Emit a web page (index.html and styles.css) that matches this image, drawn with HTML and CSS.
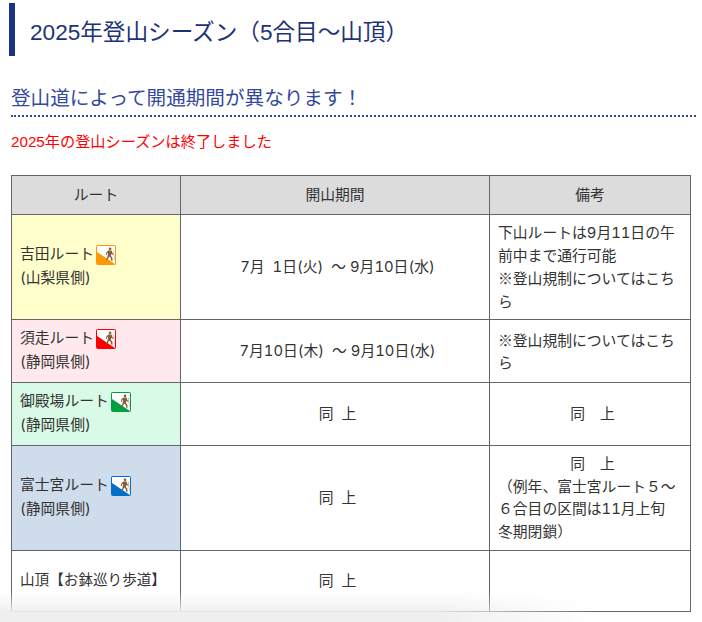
FILE: index.html
```html
<!DOCTYPE html>
<html lang="ja">
<head>
<meta charset="utf-8">
<title>2025年登山シーズン</title>
<link rel="stylesheet" href="styles.css">
</head>
<body>
<svg class="defs" width="0" height="0" aria-hidden="true">
  <symbol id="hiker" viewBox="0 0 20 20">
    <path d="M1 1H19V19L1 7Z" fill="#fff"/>
    <g transform="translate(4 .2) scale(.85)">
      <path d="M11.8 2.6a1.6 1.6 0 1 1 .1 3.2 1.6 1.6 0 0 1-.1-3.2ZM9.8 6.2l3.8.1 1.1 3.2 1.6 1-.6 1.1-2.4-1.2-.5 2.2 1.7 2 .3 3.6h-1.6l-.5-3-1.9-1.8-1.2 2.6-1.6 1.7-1-.9 1.4-2 1-4.2.1-2-1 .9-.3 2-1.2-.3.5-2.8Z" fill="#85603f"/>
      <path d="M15.6 6.5h.7l1 11h-.6Z" fill="#b59a80"/>
    </g>
  </symbol>
</svg>
<main class="page">
  <h1 class="title">2025年登山シーズン（5合目〜山頂）</h1>
  <h2 class="subtitle">登山道によって開通期間が異なります！</h2>
  <p class="notice">2025年の登山シーズンは終了しました</p>
  <table class="season">
    <colgroup><col class="col-route"><col class="col-period"><col class="col-note"></colgroup>
    <thead>
      <tr class="row-head"><th>ルート</th><th>開山期間</th><th>備考</th></tr>
    </thead>
    <tbody>
      <tr class="row-tall">
        <td class="route yoshida">吉田ルート<svg class="icon icon-orange"><use href="#hiker"/></svg><br>(山梨県側)</td>
        <td class="center shifted">7月&nbsp; 1日(火) &nbsp;〜 9月10日(水)</td>
        <td class="note">下山ルートは9月11日の午前中まで通行可能<span class="rule">※登山規制についてはこちら</span></td>
      </tr>
      <tr class="row-mid">
        <td class="route subashiri">須走ルート<svg class="icon icon-red"><use href="#hiker"/></svg><br>(静岡県側)</td>
        <td class="center shifted">7月10日(木) &nbsp;〜 9月10日(水)</td>
        <td class="note"><span class="rule">※登山規制についてはこちら</span></td>
      </tr>
      <tr class="row-mid">
        <td class="route gotemba">御殿場ルート<svg class="icon icon-green"><use href="#hiker"/></svg><br>(静岡県側)</td>
        <td class="center shifted">同&nbsp;&nbsp;上</td>
        <td class="center shifted">同　上</td>
      </tr>
      <tr class="row-tall">
        <td class="route fujinomiya">富士宮ルート<svg class="icon icon-blue"><use href="#hiker"/></svg><br>(静岡県側)</td>
        <td class="center shifted">同&nbsp;&nbsp;上</td>
        <td class="note"><span class="same">同　上</span>（例年、富士宮ルート５～６合目の区間は11月上旬<br>冬期閉鎖）</td>
      </tr>
      <tr class="row-last">
        <td class="route summit">山頂【お鉢巡り歩道】</td>
        <td class="center shifted">同&nbsp;&nbsp;上</td>
        <td class="note"></td>
      </tr>
    </tbody>
  </table>
</main>
<div class="fade"></div>
</body>
</html>
```
FILE: styles.css
```css
html, body {
  margin: 0;
  padding: 0;
  background: #fff;
}
body {
  position: relative;
  width: 702px;
  height: 622px;
  overflow: hidden;
  font-family: "Liberation Sans", "Noto Sans CJK JP", sans-serif;
  color: #333;
}
.defs {
  position: absolute;
}
.page {
  padding: 3px 0 0 9px;
}
.title {
  margin: 0;
  height: 53px;
  line-height: 60px;
  box-sizing: border-box;
  border-left: 6px solid #1c3384;
  padding-left: 15px;
  font-size: 22.6px;
  font-weight: normal;
  color: #1d3278;
}
.subtitle {
  margin: 27px 6px 0 2px;
  padding-bottom: 2px;
  height: 30px;
  line-height: 30px;
  border-bottom: 2px dotted #2c46a0;
  font-size: 19.6px;
  font-weight: normal;
  color: #34499c;
}
.notice {
  margin: 14px 0 0 2px;
  height: 22px;
  line-height: 22px;
  font-size: 15.2px;
  color: #ff0000;
}
.season {
  margin: 22px 0 0 2px;
  width: 679px;
  table-layout: fixed;
  border-collapse: collapse;
  font-family: Inter, "Noto Sans CJK JP", sans-serif;
  font-variant-numeric: tabular-nums;
  font-size: 14.8px;
  line-height: 22.5px;
}
.col-route { width: 169px; }
.col-period { width: 309px; }
.col-note { width: 201px; }
.season th, .season td {
  border: 1px solid #666;
  padding: 0 8px;
}
.season th {
  background: #dcdcdc;
  font-weight: normal;
  text-align: center;
}
.row-head { height: 39px; }
.row-tall { height: 105px; }
.row-mid { height: 63px; }
.row-last { height: 61px; }
.season .route {
  line-height: 23.5px;
  padding: 0 0 1px 8px;
}
.center {
  text-align: center;
}
.season .shifted {
  padding-left: 13px;
}
.same {
  display: block;
  text-align: center;
  padding-left: 5px;
}
.rule {
  display: block;
  font-family: "Noto Sans CJK JP", sans-serif;
}
.yoshida { background: #ffffcc; }
.subashiri { background: #ffe9ec; }
.gotemba { background: #d9fae6; }
.fujinomiya { background: #cfdcec; }
.season .summit { font-size: 14.6px; }
.icon {
  width: 20px;
  height: 20px;
  margin-left: 2px;
  vertical-align: -6px;
  border-radius: 2px;
}
.icon-orange { background: #ff9900; }
.icon-red { background: #ff0000; }
.icon-green { background: #00a040; }
.icon-blue { background: #0070c8; }
.fade {
  position: absolute;
  left: 0;
  right: 0;
  bottom: 0;
  height: 30px;
  pointer-events: none;
  background: linear-gradient(to bottom, rgba(238, 238, 238, 0), #efefef 70%);
  -webkit-mask-image: linear-gradient(to right, #000 62%, transparent 85%);
  mask-image: linear-gradient(to right, #000 62%, transparent 85%);
}
```
